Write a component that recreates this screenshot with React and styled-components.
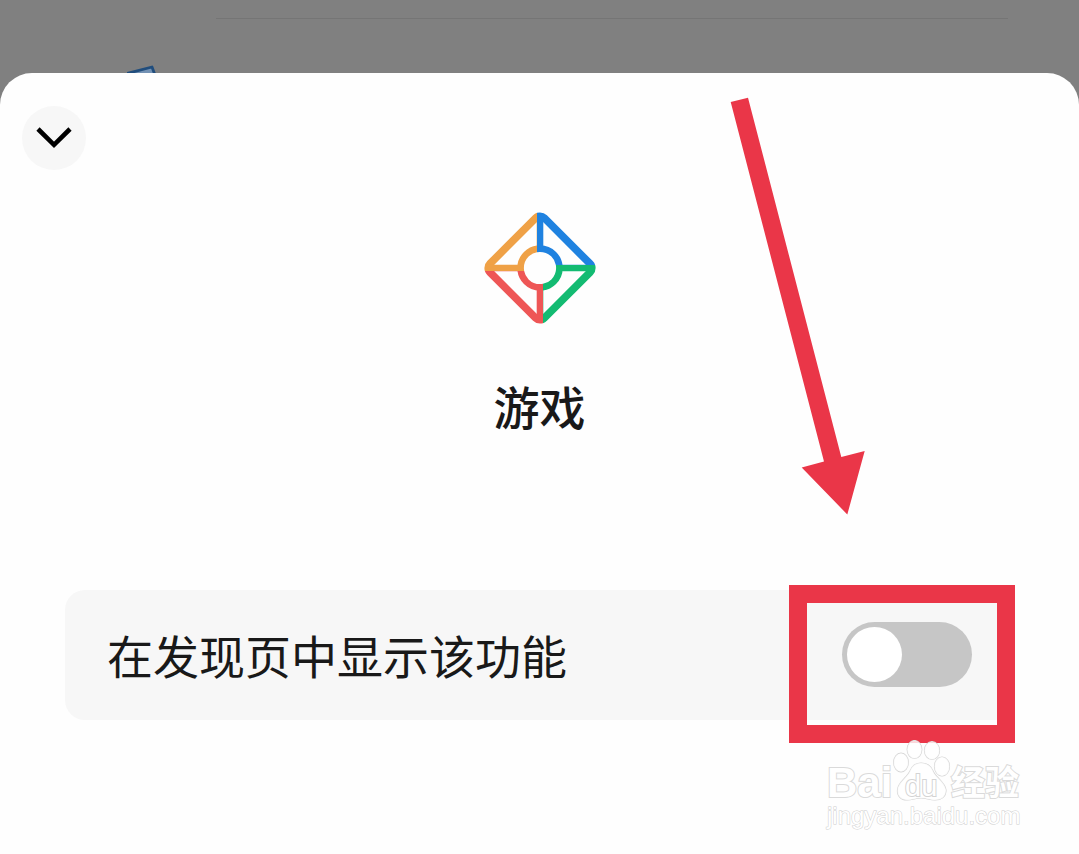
import React, { useState } from 'react';
import styled, { createGlobalStyle } from 'styled-components';

const GlobalStyle = createGlobalStyle`
  * {
    box-sizing: border-box;
  }
  body {
    margin: 0;
    background-color: #808080;
    font-family: 'Noto Sans CJK SC', sans-serif;
  }
`;

const Page = styled.div`
  display: flex;
  flex-direction: column;
  min-height: 100vh;
  background-color: #808080;
`;

const Backdrop = styled.header`
  display: flex;
  flex-direction: column;
  justify-content: space-between;
  height: 73px;
  padding-top: 18px;
`;

const Divider = styled.hr`
  height: 1px;
  margin: 0 71px 0 216px;
  border: 0;
  background-color: #757575;
`;

const PeekIcon = styled.svg`
  display: block;
  width: 30px;
  height: 8px;
  margin-left: 127px;
`;

const Sheet = styled.main`
  position: relative;
  flex: 1;
  padding: 33px 65px 60px;
  border-radius: 32px 32px 0 0;
  background-color: #fefefe;
`;

const CloseButton = styled.button`
  display: block;
  width: 64px;
  height: 64px;
  margin-left: -43px;
  padding: 0;
  border: 0;
  border-radius: 50%;
  background-color: #f7f7f7;
  cursor: pointer;
`;

const Feature = styled.section`
  display: flex;
  flex-direction: column;
  align-items: center;
  gap: 51px;
  margin: 42px 0 155px;
`;

const FeatureLogo = styled.svg`
  width: 112px;
  height: 112px;
`;

const FeatureTitle = styled.h1`
  margin: 0;
  font-size: 46px;
  font-weight: 500;
  line-height: 60px;
  color: #191919;
`;

const SettingRow = styled.div`
  position: relative;
  display: flex;
  align-items: center;
  justify-content: space-between;
  height: 130px;
  padding: 0 42px 2px;
  border-radius: 20px;
  background-color: #f7f7f7;
`;

const SettingLabel = styled.label`
  font-size: 46px;
  line-height: 60px;
  color: #191919;
`;

const Switch = styled.input`
  appearance: none;
  flex-shrink: 0;
  width: 130px;
  height: 65px;
  margin: 0;
  padding: 5px;
  border-radius: 33px;
  background-color: ${({ checked }) => (checked ? '#07c160' : '#c6c6c6')};
  cursor: pointer;

  &::before {
    content: '';
    display: block;
    width: 55px;
    height: 55px;
    margin-left: ${({ checked }) => (checked ? '65px' : '0')};
    border-radius: 50%;
    background-color: #fff;
  }
`;

const Highlight = styled.div`
  position: absolute;
  top: -5px;
  right: -1px;
  width: 226px;
  height: 158px;
  border: 18px solid #ea3648;
  pointer-events: none;
`;

const Arrow = styled.svg`
  position: absolute;
  top: 24px;
  right: 213px;
  width: 136px;
  height: 420px;
  pointer-events: none;
`;

const Watermark = styled.div`
  position: absolute;
  top: 667px;
  right: 58px;
  display: flex;
  flex-direction: column;
  width: 194px;
  font-family: 'Liberation Sans', 'Noto Sans CJK SC', sans-serif;
  color: #fff;
  -webkit-text-stroke: 2px #dadada;
  paint-order: stroke fill;
  pointer-events: none;
`;

const WatermarkLogo = styled.div`
  display: flex;
  align-items: flex-end;
  height: 62px;
  white-space: nowrap;
`;

const WatermarkWord = styled.span`
  width: ${({ $width }) => $width};
  font-size: ${({ $size }) => $size};
  font-weight: bold;
  line-height: 38px;
`;

const Paw = styled.svg`
  flex-shrink: 0;
  width: 58px;
  height: 62px;
`;

const WatermarkUrl = styled.span`
  font-size: 24px;
  line-height: 28px;
  -webkit-text-stroke: 1px #cecece;
`;

const LOGO_PARTS = [
  { id: 'top', color: '#1f82e0', x: 53, y: 0, width: 59, height: 53 },
  { id: 'right', color: '#13bb72', x: 59, y: 53, width: 53, height: 59 },
  { id: 'bottom', color: '#ee5656', x: 0, y: 59, width: 59, height: 53 },
  { id: 'left', color: '#efa146', x: 0, y: 0, width: 53, height: 59 },
];

function GameLogo() {
  return (
    <FeatureLogo viewBox="0 0 112 112" aria-hidden="true">
      {LOGO_PARTS.map(({ id, color, ...area }) => (
        <g key={id}>
          <clipPath id={`logo-${id}`}>
            <rect {...area} />
          </clipPath>
          <g
            clipPath={`url(#logo-${id})`}
            fill="none"
            stroke={color}
            strokeWidth="6.6"
          >
            <rect
              x="17.6"
              y="17.6"
              width="76.8"
              height="76.8"
              rx="6"
              strokeWidth="7.6"
              transform="rotate(45 56 56)"
            />
            <circle cx="56" cy="56" r="19.4" />
            <path d="M56 3V37M56 75V109M3 56H37M75 56H109" />
          </g>
        </g>
      ))}
    </FeatureLogo>
  );
}

function App() {
  const [visible, setVisible] = useState(false);

  return (
    <Page>
      <GlobalStyle />
      <Backdrop>
        <Divider />
        <PeekIcon viewBox="0 0 30 8" aria-hidden="true">
          <path
            d="M0 8.5L25 2L28 10"
            fill="#7391b3"
            stroke="#204d7d"
            strokeWidth="2.8"
            strokeLinejoin="round"
          />
        </PeekIcon>
      </Backdrop>
      <Sheet>
        <CloseButton type="button" aria-label="关闭">
          <svg width="64" height="64" viewBox="0 0 64 64" fill="none">
            <path
              d="M16 23L32 38.8L48 23"
              stroke="#000"
              strokeWidth="4.6"
            />
          </svg>
        </CloseButton>

        <Feature>
          <GameLogo />
          <FeatureTitle>游戏</FeatureTitle>
        </Feature>

        <SettingRow>
          <SettingLabel htmlFor="show-feature">在发现页中显示该功能</SettingLabel>
          <Switch
            id="show-feature"
            type="checkbox"
            role="switch"
            checked={visible}
            onChange={(e) => setVisible(e.target.checked)}
          />
          <Highlight />
        </SettingRow>

        <Arrow viewBox="0 0 136 420" aria-hidden="true">
          <path
            d="M0.7 5L18 0.7L111.3 360L134.7 354L117.3 417.5L71.7 370.5L94 364.5Z"
            fill="#ea3648"
          />
        </Arrow>

        <Watermark>
          <WatermarkLogo>
            <WatermarkWord $size="42px" $width="66px">
              Bai
            </WatermarkWord>
            <Paw viewBox="0 0 58 62">
              <g
                fill="#fff"
                fillOpacity="0.8"
                stroke="#d4d4d4"
                strokeWidth="1.2"
              >
                <ellipse cx="8" cy="22.5" rx="7.3" ry="9.3" />
                <ellipse cx="21.5" cy="9.5" rx="7.3" ry="9" />
                <ellipse cx="39" cy="10.5" rx="7.5" ry="9" />
                <ellipse cx="49" cy="26.5" rx="7.5" ry="9.5" />
                <path d="M28 23C34 23 38 26 40 31C42 37 52 42 53 50C53 57 48 60 42 60C36 60 34 58 28 58C22 58 20 60 14 60C8 60 4 56 4.500 50C5 42 14 38 17 31C19 26 22 23 28 23Z" />
              </g>
              <text
                x="12"
                y="56"
                fontSize="29"
                fill="#fff"
                stroke="#d4d4d4"
                strokeWidth="2"
              >
                du
              </text>
            </Paw>
            <WatermarkWord $size="34px" $width="70px">
              经验
            </WatermarkWord>
          </WatermarkLogo>
          <WatermarkUrl>jingyan.baidu.com</WatermarkUrl>
        </Watermark>
      </Sheet>
    </Page>
  );
}

export default App;
